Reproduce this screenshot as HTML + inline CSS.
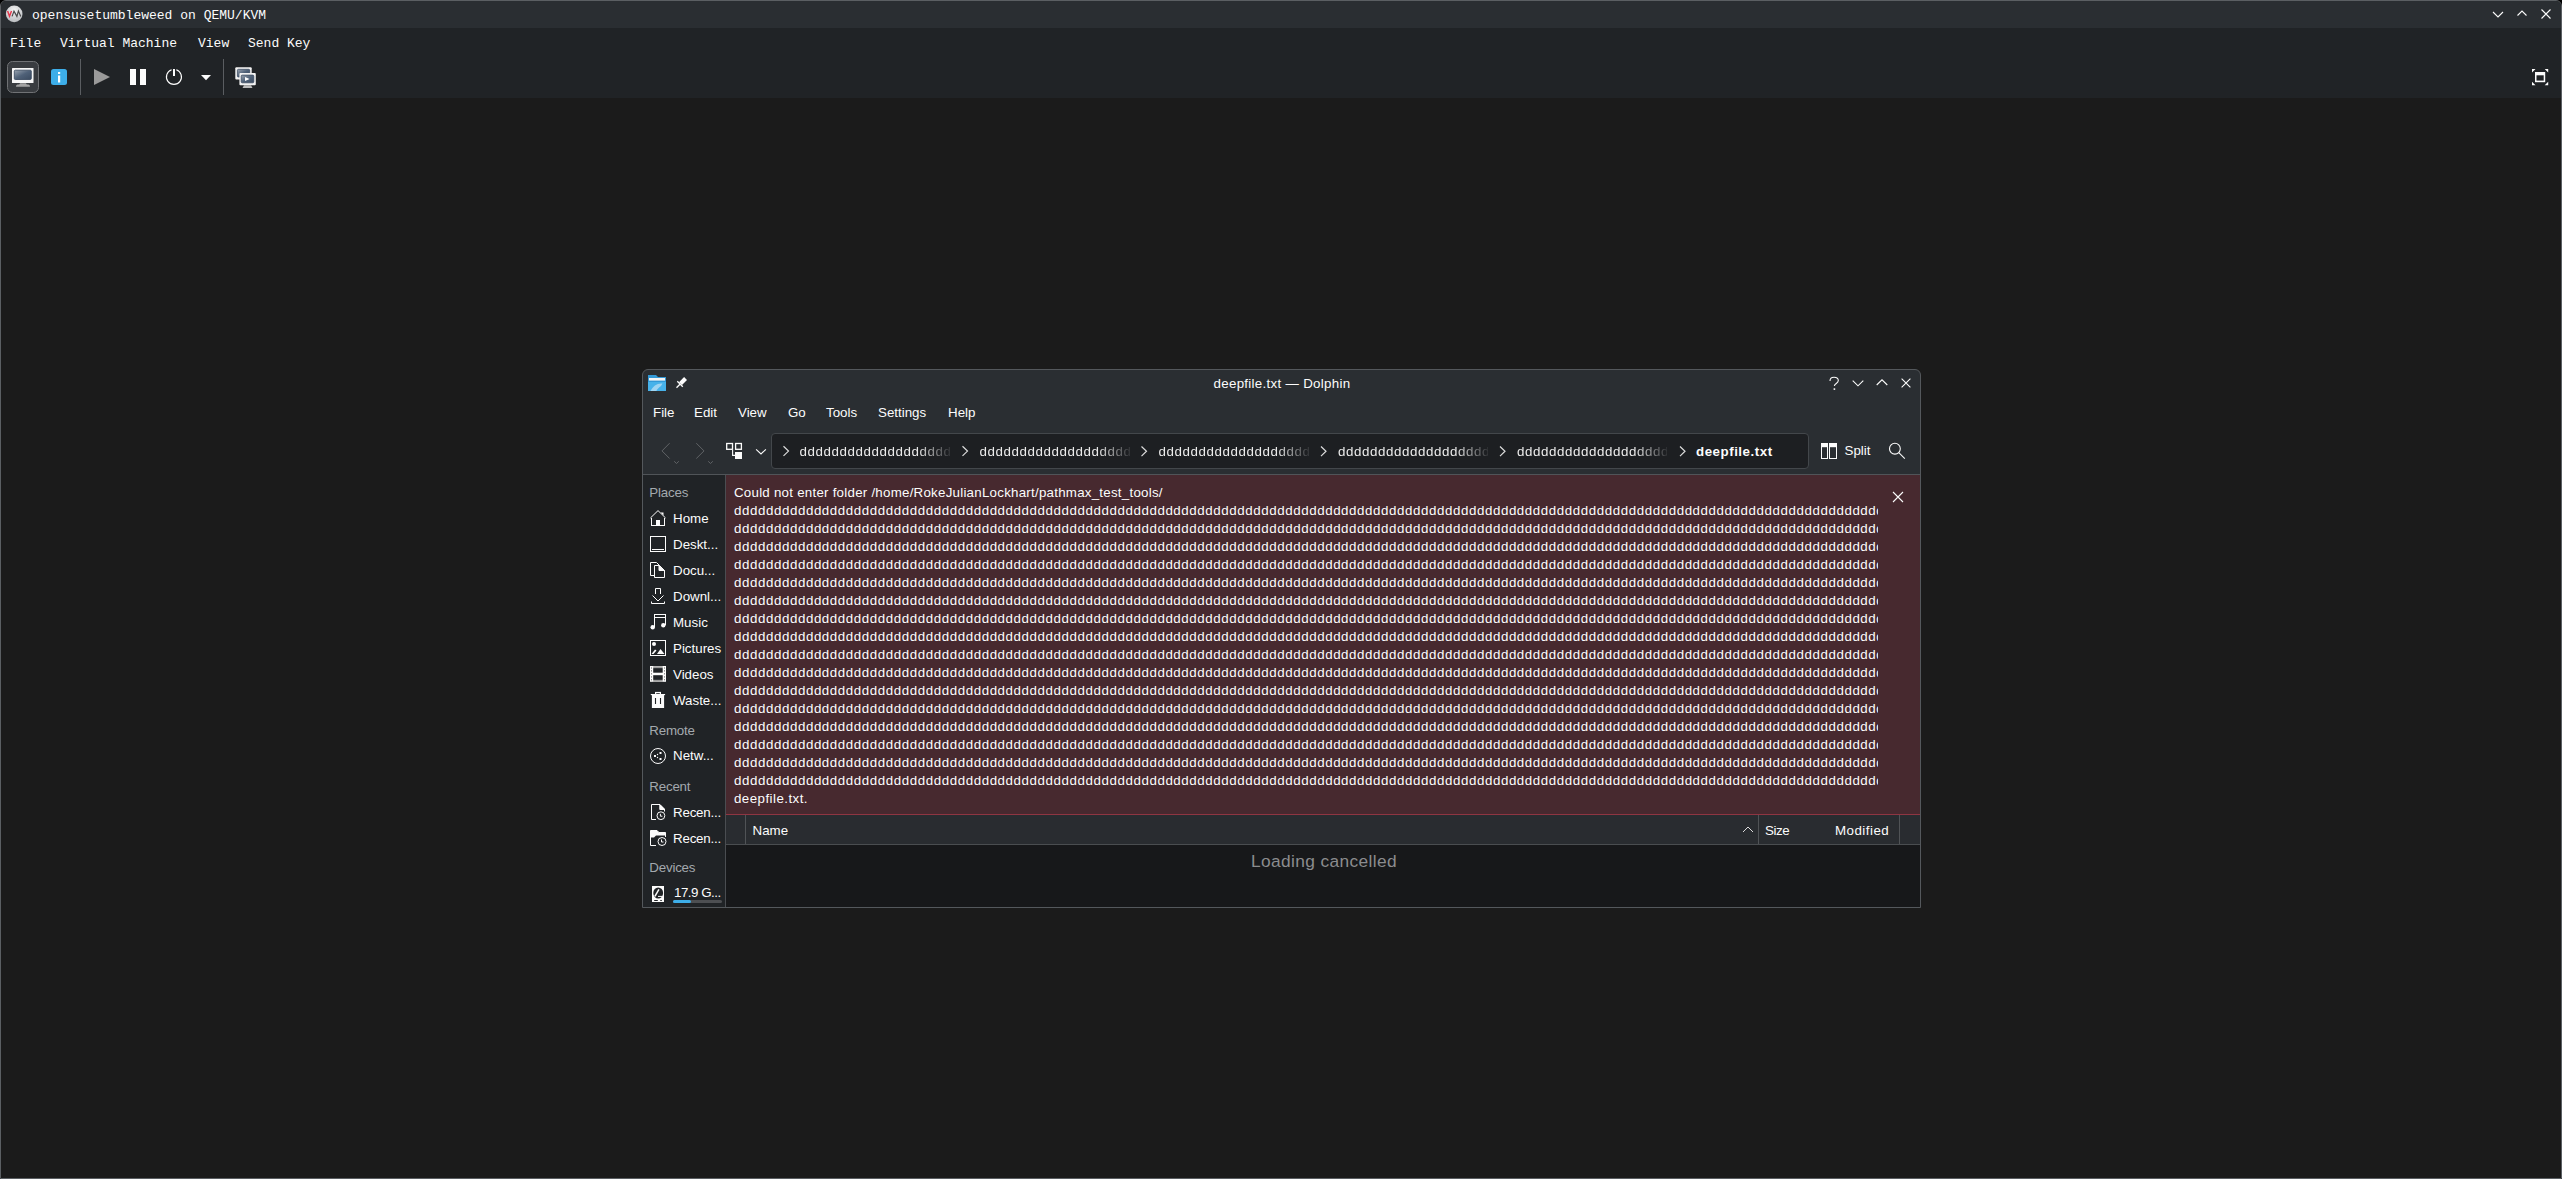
<!DOCTYPE html>
<html><head><meta charset="utf-8">
<style>
*{box-sizing:border-box;margin:0;padding:0}
html,body{width:2562px;height:1179px;overflow:hidden;background:#000}
body{position:relative;font-family:"Liberation Sans",sans-serif;color:#fcfcfc}
.abs{position:absolute}
#frame{position:absolute;left:0;top:0;width:2562px;height:1179px;border:1px solid #5b5f63;border-radius:6px 6px 0 0;background:#1b1b1b;overflow:hidden}
#vtitle{position:absolute;left:0;top:0;width:2560px;height:27px;background:#2a2e32}
#vbar{position:absolute;left:0;top:27px;width:2560px;height:70px;background:#202326}
.mono{font-family:"Liberation Mono",monospace;font-size:13px;white-space:pre;line-height:1}
.sans{font-family:"Liberation Sans",sans-serif;font-size:13.33px;white-space:pre;line-height:1}
#dw{position:absolute;left:642px;top:369px;width:1279px;height:539px;border:1px solid #54585c;border-radius:6px 6px 0 0;background:#2a2e32;overflow:hidden}
</style></head><body>
<div id="frame">
  <div id="vtitle"></div>
  <div id="vbar"></div>
</div>
<!-- VM title -->
<div class="abs mono" style="left:32px;top:9px">opensusetumbleweed on QEMU/KVM</div>
<div class="abs mono" style="left:10px;top:37px">File</div>
<div class="abs mono" style="left:60px;top:37px">Virtual Machine</div>
<div class="abs mono" style="left:198px;top:37px">View</div>
<div class="abs mono" style="left:248px;top:37px">Send Key</div>


<!-- VM icons -->
<svg class="abs" style="left:0;top:0" width="2562" height="100" viewBox="0 0 2562 100">
  <defs>
    <linearGradient id="scr" x1="0" y1="0" x2="1" y2="1">
      <stop offset="0" stop-color="#9aa4b0"/><stop offset="0.5" stop-color="#4f6178"/><stop offset="1" stop-color="#3b4b60"/>
    </linearGradient>
    <radialGradient id="vmg" cx="0.5" cy="0.3" r="0.7">
      <stop offset="0" stop-color="#f4f4f4"/><stop offset="1" stop-color="#b9bcbf"/>
    </radialGradient>
  </defs>
  <!-- vm logo -->
  <circle cx="14.2" cy="13.9" r="8.3" fill="url(#vmg)"/>
  <path d="M7.6 11.1 L9.5 16.3 L11.5 11.1" stroke="#e4354a" stroke-width="1.4" fill="none"/>
  <path d="M12.1 16.4 L14 11.1 L16.9 16.4 L18.4 11.1 L20.8 16.4" stroke="#4a4a4a" stroke-width="1.2" fill="none"/>
  <!-- console button -->
  <rect x="7.5" y="61.5" width="31" height="31" rx="5" fill="#393c40" stroke="#707275" stroke-width="1"/>
  <rect x="12" y="68" width="21.5" height="15" rx="0.5" fill="#f6f6f6"/>
  <rect x="14.3" y="70.2" width="17" height="9.3" rx="1" fill="url(#scr)" stroke="#34445a" stroke-width="0.8"/>
  <path d="M20 83.3 H26 L26.8 84.6 H28.5 Q30.2 85 30 86.8 H16 Q15.8 85 17.5 84.6 H19.2 Z" fill="#a3a3a3"/>
  <!-- info -->
  <rect x="51" y="69" width="16" height="16" rx="2.5" fill="#3daee9"/>
  <rect x="58" y="72" width="2.2" height="2" fill="#fff"/>
  <rect x="58" y="75.5" width="2.2" height="7" fill="#fff"/>
  <!-- separators -->
  <rect x="80" y="59" width="1" height="36" fill="#5a5d61"/>
  <rect x="223" y="59" width="1" height="36" fill="#5a5d61"/>
  <!-- play -->
  <path d="M94 69 L110 77 L94 85 Z" fill="#9a9a9a"/>
  <!-- pause -->
  <rect x="130" y="69" width="6" height="16" fill="#fcfcfc"/>
  <rect x="140" y="69" width="6" height="16" fill="#fcfcfc"/>
  <!-- power -->
  <path d="M171.6 69.75 A7.5 7.5 0 1 0 176.3 69.75" stroke="#fcfcfc" stroke-width="1.15" fill="none"/>
  <rect x="173" y="69" width="2" height="7" fill="#fcfcfc"/>
  <!-- dropdown -->
  <path d="M201 75 L211 75 L206 80.3 Z" fill="#fcfcfc"/>
  <!-- multi monitor -->
  <rect x="235.3" y="67.2" width="16.4" height="12.2" rx="1" fill="#f2f2f2"/>
  <rect x="237.4" y="69.3" width="12.3" height="7.7" rx="1" fill="url(#scr)" stroke="#34445a" stroke-width="0.7"/>
  <rect x="239.4" y="73.1" width="16.4" height="12.2" rx="1" fill="#f2f2f2"/>
  <rect x="241.2" y="75.1" width="12.6" height="7.7" rx="1" fill="url(#scr)" stroke="#34445a" stroke-width="0.7"/>
  <path d="M245 77 L249.6 79 L245 81 Z" fill="#fff"/>
  <path d="M244 85.3 L251 85.3 L252.5 88 L242.5 88 Z" fill="#bdbdbd"/>
  <!-- window buttons -->
  <path d="M2493 12 L2498 17 L2503 12" stroke="#fcfcfc" stroke-width="1.1" fill="none"/>
  <path d="M2517.5 15.5 L2522 11 L2526.5 15.5" stroke="#fcfcfc" stroke-width="1.1" fill="none"/>
  <path d="M2541.5 9.5 L2550.5 18.5 M2550.5 9.5 L2541.5 18.5" stroke="#fcfcfc" stroke-width="1.1" fill="none"/>
  <!-- fullscreen -->
  <rect x="2535" y="72" width="10.2" height="10.2" fill="#fcfcfc"/>
  <rect x="2536.5" y="75.3" width="7.2" height="5.3" fill="#202326"/>
  <path d="M2532 69 L2535.5 69 L2532 72.5 Z M2548.2 69 L2544.7 69 L2548.2 72.5 Z M2532 85.2 L2535.5 85.2 L2532 81.7 Z M2548.2 85.2 L2544.7 85.2 L2548.2 81.7 Z" fill="#fcfcfc"/>
</svg>

<!-- Dolphin window -->
<div id="dw">
  <div class="abs" style="left:0;top:104px;width:1277px;height:1px;background:#505458"></div>
  <div class="abs" style="left:0;top:105px;width:82px;height:432px;background:#202326"></div>
  <div class="abs" style="left:82px;top:105px;width:1px;height:432px;background:#4a4d51"></div>
  <div class="abs" style="left:83px;top:105px;width:1194px;height:339px;background:#47292f"></div>
  <div class="abs" style="left:83px;top:444px;width:1194px;height:1px;background:#8f3542"></div>
  <div class="abs" style="left:83px;top:445px;width:1194px;height:29px;background:#292c30"></div>
  <div class="abs" style="left:83px;top:474px;width:1194px;height:1px;background:#4a4d50"></div>
  <div class="abs" style="left:83px;top:475px;width:1194px;height:62px;background:#17181a"></div>
</div>
<div class="abs sans" style="left:1182px;width:200px;text-align:center;top:376.62px;letter-spacing:0.3px">deepfile.txt — Dolphin</div>
<div class="abs sans" style="left:653px;top:405.72px;font-size:13.33px;color:#fcfcfc;">File</div>
<div class="abs sans" style="left:694px;top:405.72px;font-size:13.33px;color:#fcfcfc;">Edit</div>
<div class="abs sans" style="left:738px;top:405.72px;font-size:13.33px;color:#fcfcfc;">View</div>
<div class="abs sans" style="left:788px;top:405.72px;font-size:13.33px;color:#fcfcfc;">Go</div>
<div class="abs sans" style="left:826px;top:405.72px;font-size:13.33px;color:#fcfcfc;">Tools</div>
<div class="abs sans" style="left:878px;top:405.72px;font-size:13.33px;color:#fcfcfc;">Settings</div>
<div class="abs sans" style="left:948px;top:405.72px;font-size:13.33px;color:#fcfcfc;">Help</div>
<div class="abs" style="left:771px;top:433px;width:1038px;height:36px;border:1px solid #43474b;border-radius:4px;background:#1d1f22"></div>
<div class="abs sans" style="left:799.5px;top:444.52px;width:150px;overflow:hidden;letter-spacing:0.59px;color:#ececec;-webkit-mask-image:linear-gradient(to right,#000 0,#000 78%,rgba(0,0,0,0.1) 100%);mask-image:linear-gradient(to right,#000 0,#000 78%,rgba(0,0,0,0.1) 100%)">ddddddddddddddddddd</div>
<div class="abs sans" style="left:979.5px;top:444.52px;width:150px;overflow:hidden;letter-spacing:0.59px;color:#ececec;-webkit-mask-image:linear-gradient(to right,#000 0,#000 78%,rgba(0,0,0,0.1) 100%);mask-image:linear-gradient(to right,#000 0,#000 78%,rgba(0,0,0,0.1) 100%)">ddddddddddddddddddd</div>
<div class="abs sans" style="left:1158.5px;top:444.52px;width:150px;overflow:hidden;letter-spacing:0.59px;color:#ececec;-webkit-mask-image:linear-gradient(to right,#000 0,#000 78%,rgba(0,0,0,0.1) 100%);mask-image:linear-gradient(to right,#000 0,#000 78%,rgba(0,0,0,0.1) 100%)">ddddddddddddddddddd</div>
<div class="abs sans" style="left:1338px;top:444.52px;width:150px;overflow:hidden;letter-spacing:0.59px;color:#ececec;-webkit-mask-image:linear-gradient(to right,#000 0,#000 78%,rgba(0,0,0,0.1) 100%);mask-image:linear-gradient(to right,#000 0,#000 78%,rgba(0,0,0,0.1) 100%)">ddddddddddddddddddd</div>
<div class="abs sans" style="left:1517px;top:444.52px;width:150px;overflow:hidden;letter-spacing:0.59px;color:#ececec;-webkit-mask-image:linear-gradient(to right,#000 0,#000 78%,rgba(0,0,0,0.1) 100%);mask-image:linear-gradient(to right,#000 0,#000 78%,rgba(0,0,0,0.1) 100%)">ddddddddddddddddddd</div>
<div class="abs sans" style="left:1696px;top:444.52px;font-weight:bold;letter-spacing:0.52px">deepfile.txt</div>
<div class="abs sans" style="left:1844.5px;top:444.32px;font-size:13.33px;color:#fcfcfc;">Split</div>
<div class="abs sans" style="left:649.3px;top:485.72px;font-size:13.33px;color:#a3a9ae;letter-spacing:-0.2px">Places</div>
<div class="abs sans" style="left:673px;top:511.52px;font-size:13.33px;color:#fcfcfc;">Home</div>
<div class="abs sans" style="left:673px;top:537.52px;font-size:13.33px;color:#fcfcfc;">Deskt...</div>
<div class="abs sans" style="left:673px;top:563.52px;font-size:13.33px;color:#fcfcfc;">Docu...</div>
<div class="abs sans" style="left:673px;top:589.52px;font-size:13.33px;color:#fcfcfc;">Downl...</div>
<div class="abs sans" style="left:673px;top:615.52px;font-size:13.33px;color:#fcfcfc;">Music</div>
<div class="abs sans" style="left:673px;top:641.52px;font-size:13.33px;color:#fcfcfc;">Pictures</div>
<div class="abs sans" style="left:673px;top:667.52px;font-size:13.33px;color:#fcfcfc;">Videos</div>
<div class="abs sans" style="left:673px;top:693.52px;font-size:13.33px;color:#fcfcfc;">Waste...</div>
<div class="abs sans" style="left:649.3px;top:723.52px;font-size:13.33px;color:#a3a9ae;letter-spacing:-0.2px">Remote</div>
<div class="abs sans" style="left:673px;top:749.02px;font-size:13.33px;color:#fcfcfc;">Netw...</div>
<div class="abs sans" style="left:649.3px;top:779.52px;font-size:13.33px;color:#a3a9ae;letter-spacing:-0.2px">Recent</div>
<div class="abs sans" style="left:673px;top:805.62px;font-size:13.33px;color:#fcfcfc;letter-spacing:-0.2px">Recen...</div>
<div class="abs sans" style="left:673px;top:831.62px;font-size:13.33px;color:#fcfcfc;letter-spacing:-0.2px">Recen...</div>
<div class="abs sans" style="left:649.3px;top:861.42px;font-size:13.33px;color:#a3a9ae;letter-spacing:-0.2px">Devices</div>
<div class="abs sans" style="left:674px;top:885.72px;font-size:13.33px;color:#fcfcfc;letter-spacing:-0.5px">17.9 G...</div>
<div class="abs" style="left:673px;top:900px;width:49px;height:3px;border-radius:1.5px;background:#4d4f52"></div>
<div class="abs" style="left:673px;top:900px;width:18px;height:3px;border-radius:1.5px;background:#3daee9"></div>
<div class="abs sans" style="left:734px;top:485.72px;font-size:13.33px;color:#fcfcfc;letter-spacing:0.24px">Could not enter folder /home/RokeJulianLockhart/pathmax_test_tools/</div>
<div class="abs sans" style="left:734px;top:503.72px;width:1144px;overflow:hidden;letter-spacing:0.576px">dddddddddddddddddddddddddddddddddddddddddddddddddddddddddddddddddddddddddddddddddddddddddddddddddddddddddddddddddddddddddddddddddddddddddddddddddddddddddddddddd</div>
<div class="abs sans" style="left:734px;top:521.72px;width:1144px;overflow:hidden;letter-spacing:0.576px">dddddddddddddddddddddddddddddddddddddddddddddddddddddddddddddddddddddddddddddddddddddddddddddddddddddddddddddddddddddddddddddddddddddddddddddddddddddddddddddddd</div>
<div class="abs sans" style="left:734px;top:539.72px;width:1144px;overflow:hidden;letter-spacing:0.576px">dddddddddddddddddddddddddddddddddddddddddddddddddddddddddddddddddddddddddddddddddddddddddddddddddddddddddddddddddddddddddddddddddddddddddddddddddddddddddddddddd</div>
<div class="abs sans" style="left:734px;top:557.72px;width:1144px;overflow:hidden;letter-spacing:0.576px">dddddddddddddddddddddddddddddddddddddddddddddddddddddddddddddddddddddddddddddddddddddddddddddddddddddddddddddddddddddddddddddddddddddddddddddddddddddddddddddddd</div>
<div class="abs sans" style="left:734px;top:575.72px;width:1144px;overflow:hidden;letter-spacing:0.576px">dddddddddddddddddddddddddddddddddddddddddddddddddddddddddddddddddddddddddddddddddddddddddddddddddddddddddddddddddddddddddddddddddddddddddddddddddddddddddddddddd</div>
<div class="abs sans" style="left:734px;top:593.72px;width:1144px;overflow:hidden;letter-spacing:0.576px">dddddddddddddddddddddddddddddddddddddddddddddddddddddddddddddddddddddddddddddddddddddddddddddddddddddddddddddddddddddddddddddddddddddddddddddddddddddddddddddddd</div>
<div class="abs sans" style="left:734px;top:611.72px;width:1144px;overflow:hidden;letter-spacing:0.576px">dddddddddddddddddddddddddddddddddddddddddddddddddddddddddddddddddddddddddddddddddddddddddddddddddddddddddddddddddddddddddddddddddddddddddddddddddddddddddddddddd</div>
<div class="abs sans" style="left:734px;top:629.72px;width:1144px;overflow:hidden;letter-spacing:0.576px">dddddddddddddddddddddddddddddddddddddddddddddddddddddddddddddddddddddddddddddddddddddddddddddddddddddddddddddddddddddddddddddddddddddddddddddddddddddddddddddddd</div>
<div class="abs sans" style="left:734px;top:647.72px;width:1144px;overflow:hidden;letter-spacing:0.576px">dddddddddddddddddddddddddddddddddddddddddddddddddddddddddddddddddddddddddddddddddddddddddddddddddddddddddddddddddddddddddddddddddddddddddddddddddddddddddddddddd</div>
<div class="abs sans" style="left:734px;top:665.72px;width:1144px;overflow:hidden;letter-spacing:0.576px">dddddddddddddddddddddddddddddddddddddddddddddddddddddddddddddddddddddddddddddddddddddddddddddddddddddddddddddddddddddddddddddddddddddddddddddddddddddddddddddddd</div>
<div class="abs sans" style="left:734px;top:683.72px;width:1144px;overflow:hidden;letter-spacing:0.576px">dddddddddddddddddddddddddddddddddddddddddddddddddddddddddddddddddddddddddddddddddddddddddddddddddddddddddddddddddddddddddddddddddddddddddddddddddddddddddddddddd</div>
<div class="abs sans" style="left:734px;top:701.72px;width:1144px;overflow:hidden;letter-spacing:0.576px">dddddddddddddddddddddddddddddddddddddddddddddddddddddddddddddddddddddddddddddddddddddddddddddddddddddddddddddddddddddddddddddddddddddddddddddddddddddddddddddddd</div>
<div class="abs sans" style="left:734px;top:719.72px;width:1144px;overflow:hidden;letter-spacing:0.576px">dddddddddddddddddddddddddddddddddddddddddddddddddddddddddddddddddddddddddddddddddddddddddddddddddddddddddddddddddddddddddddddddddddddddddddddddddddddddddddddddd</div>
<div class="abs sans" style="left:734px;top:737.72px;width:1144px;overflow:hidden;letter-spacing:0.576px">dddddddddddddddddddddddddddddddddddddddddddddddddddddddddddddddddddddddddddddddddddddddddddddddddddddddddddddddddddddddddddddddddddddddddddddddddddddddddddddddd</div>
<div class="abs sans" style="left:734px;top:755.72px;width:1144px;overflow:hidden;letter-spacing:0.576px">dddddddddddddddddddddddddddddddddddddddddddddddddddddddddddddddddddddddddddddddddddddddddddddddddddddddddddddddddddddddddddddddddddddddddddddddddddddddddddddddd</div>
<div class="abs sans" style="left:734px;top:773.72px;width:1144px;overflow:hidden;letter-spacing:0.576px">dddddddddddddddddddddddddddddddddddddddddddddddddddddddddddddddddddddddddddddddddddddddddddddddddddddddddddddddddddddddddddddddddddddddddddddddddddddddddddddddd</div>
<div class="abs sans" style="left:734px;top:791.72px;font-size:13.33px;color:#fcfcfc;letter-spacing:0.45px">deepfile.txt.</div>
<div class="abs" style="left:745px;top:815px;width:1px;height:29px;background:#505356"></div>
<div class="abs" style="left:1758px;top:815px;width:1px;height:29px;background:#505356"></div>
<div class="abs" style="left:1899px;top:815px;width:1px;height:29px;background:#505356"></div>
<div class="abs sans" style="left:752.5px;top:823.72px;font-size:13.33px;color:#fcfcfc;">Name</div>
<div class="abs sans" style="left:1765px;top:823.72px;font-size:13.33px;color:#fcfcfc;letter-spacing:-0.45px">Size</div>
<div class="abs sans" style="left:1835px;top:823.72px;font-size:13.33px;color:#fcfcfc;letter-spacing:0.48px">Modified</div>
<div class="abs sans" style="left:1251px;top:853.33px;font-size:17.33px;color:#8b8c8e;letter-spacing:0.37px">Loading cancelled</div>
<svg class="abs" style="left:0;top:0" width="2562" height="1179" viewBox="0 0 2562 1179">
<defs>
 <linearGradient id="fold" x1="0" y1="0" x2="0" y2="1"><stop offset="0" stop-color="#3a9fd8"/><stop offset="1" stop-color="#2f8fca"/></linearGradient>
</defs>
<!-- dolphin folder icon -->
<path d="M648 375 H656 L658 377 H666 V391 H648 Z" fill="#3399d6"/>
<rect x="649" y="378" width="16" height="2.6" fill="#f4f4f4"/>
<path d="M648 382 H666 V391 H648 Z" fill="#47b2ea"/>
<path d="M650.5 391 C653 386 657 383 662.5 383.5 L661 386 C658 388 656.5 390 656.5 391 Z" fill="#9fd4f2"/>
<!-- pin -->
<path d="M679 382.2 L684.1 377 L687 379.9 L682 385.1 Z" fill="#fcfcfc"/>
<path d="M677.3 381.2 L682.8 386.7" stroke="#fcfcfc" stroke-width="1.3" fill="none"/>
<path d="M680.2 384 L676.5 387.8" stroke="#fcfcfc" stroke-width="1.3" fill="none"/>
<!-- title buttons -->
<path d="M1830 381 C1830 378.3 1832 377.3 1834 377.3 C1836.3 377.3 1838.3 378.5 1838.3 380.6 C1838.3 383.3 1834.4 383.6 1834.4 386" stroke="#fcfcfc" stroke-width="1.1" fill="none"/>
<rect x="1833.6" y="388.3" width="1.6" height="1.6" fill="#fcfcfc"/>
<path d="M1852.7 380.6 L1858 385.8 L1863.3 380.6" stroke="#fcfcfc" stroke-width="1.1" fill="none"/>
<path d="M1876.7 385 L1882 379.8 L1887.3 385" stroke="#fcfcfc" stroke-width="1.1" fill="none"/>
<path d="M1901.6 378.6 L1910.4 387.4 M1910.4 378.6 L1901.6 387.4" stroke="#fcfcfc" stroke-width="1.1" fill="none"/>
<!-- nav -->
<path d="M669.6 443.2 L662 450.9 L669.6 458.5" stroke="#606366" stroke-width="1" fill="none"/>
<path d="M674.2 461.3 L676.5 463.5 L678.8 461.3" stroke="#606366" stroke-width="1" fill="none"/>
<path d="M696.3 443.2 L704 450.9 L696.3 458.5" stroke="#606366" stroke-width="1" fill="none"/>
<path d="M708.2 461.3 L710.5 463.5 L712.8 461.3" stroke="#606366" stroke-width="1" fill="none"/>
<!-- view icon -->
<rect x="726.7" y="443.5" width="5.8" height="5.8" stroke="#fcfcfc" stroke-width="1.3" fill="none"/>
<rect x="735.6" y="443.5" width="5.8" height="5.8" stroke="#fcfcfc" stroke-width="1.3" fill="none"/>
<rect x="735" y="452" width="7" height="7" fill="#fcfcfc"/>
<path d="M732.6 450 V455.4 H735" stroke="#fcfcfc" stroke-width="1.1" fill="none"/>
<path d="M756.1 449.3 L761 453.9 L765.9 449.3" stroke="#fcfcfc" stroke-width="1.1" fill="none"/>
<!-- crumb chevrons -->
<path d="M783.5 446.3 L788.5 451.1 L783.5 455.9" stroke="#dcdcdc" stroke-width="1.2" fill="none"/>
<path d="M962.5 446.3 L967.5 451.1 L962.5 455.9" stroke="#dcdcdc" stroke-width="1.2" fill="none"/>
<path d="M1141.5 446.5 L1146.5 451.3 L1141.5 456.1" stroke="#dcdcdc" stroke-width="1.2" fill="none"/>
<path d="M1321 446.5 L1326 451.3 L1321 456.1" stroke="#dcdcdc" stroke-width="1.2" fill="none"/>
<path d="M1500 446.5 L1505 451.3 L1500 456.1" stroke="#dcdcdc" stroke-width="1.2" fill="none"/>
<path d="M1680 446.5 L1685 451.3 L1680 456.1" stroke="#dcdcdc" stroke-width="1.2" fill="none"/>

<!-- split icon -->
<rect x="1821.5" y="443.5" width="6" height="15" stroke="#fcfcfc" stroke-width="1" fill="none"/>
<rect x="1829.5" y="443.5" width="7" height="15" stroke="#fcfcfc" stroke-width="1" fill="none"/>
<rect x="1822" y="444" width="5.5" height="3.2" fill="#fcfcfc"/>
<rect x="1830" y="444" width="6.5" height="3.2" fill="#fcfcfc"/>
<!-- search -->
<circle cx="1894.9" cy="448.7" r="5.4" stroke="#fcfcfc" stroke-width="1.1" fill="none"/>
<path d="M1898.8 452.6 L1904.8 458.6" stroke="#fcfcfc" stroke-width="1.1" fill="none"/>
<!-- message close -->
<path d="M1893 492 L1903 502 M1903 492 L1893 502" stroke="#fcfcfc" stroke-width="1.1" fill="none"/>
<!-- sort arrow -->
<path d="M1743 832 L1748 827 L1753 832" stroke="#dcdcdc" stroke-width="1" fill="none"/>
<g transform="translate(650 510)" fill="none" stroke="#fcfcfc" stroke-width="1"><path d="M1.5 16 V8 M14.5 16 V8 M0.4 8 L8 0.6 L15.6 8"/><path d="M1 15.5 H15"/><rect x="6" y="10" width="4" height="5.5" fill="#fcfcfc" stroke="none"/><path d="M10.5 2.5 H13.5 V5.5 Z" fill="#fcfcfc" stroke="none"/></g>
<g transform="translate(650 536)" fill="none" stroke="#fcfcfc" stroke-width="1"><rect x="0.5" y="0.5" width="15" height="15"/><path d="M2 13.5 H14"/></g>
<g transform="translate(650 562)" fill="none" stroke="#fcfcfc" stroke-width="1"><path d="M4 13.5 H0.5 V0.5 H6.5 L9 3"/><path d="M4.5 3.5 H9.5 L14.5 8.5 V15.5 H4.5 Z"/><path d="M9 3.5 V8.5 H14.5 Z" fill="#fcfcfc"/></g>
<g transform="translate(650 588)" fill="none" stroke="#fcfcfc" stroke-width="1"><path d="M5.5 6 V0.5 H10.5 V6"/><path d="M2.5 7.5 L8 13 L13.5 7.5"/><path d="M1.5 13.5 V15.5 H14.5 V13.5"/></g>
<g transform="translate(650 614)" fill="none" stroke="#fcfcfc" stroke-width="1"><rect x="4.5" y="0.5" width="11" height="3"/><path d="M4.5 3 V13 M15.5 3 V11"/><circle cx="2.7" cy="13.3" r="2.2" fill="#fcfcfc" stroke="none"/><circle cx="13.3" cy="11.3" r="2.2" fill="#fcfcfc" stroke="none"/></g>
<g transform="translate(650 640)" fill="none" stroke="#fcfcfc" stroke-width="1"><rect x="0.5" y="0.5" width="15" height="15"/><circle cx="4" cy="4" r="2" fill="#fcfcfc" stroke="none"/><path d="M1.5 14 L5 9.5 L6.5 10.5 L3.5 14 Z M7 14 L10.5 9 L14.5 14 Z" fill="#fcfcfc" stroke="none"/></g>
<g transform="translate(650 666)" fill="none" stroke="#fcfcfc" stroke-width="1"><rect x="0" y="0" width="16" height="15.8" fill="#fcfcfc" stroke="none"/><rect x="3.2" y="0.3" width="9.5" height="1.8" fill="#9c9c9c" stroke="none"/><rect x="3.2" y="14" width="9.5" height="1.7" fill="#9c9c9c" stroke="none"/><rect x="3.2" y="2.1" width="9.5" height="4.6" fill="#202326" stroke="none"/><rect x="3.2" y="9.2" width="9.5" height="4.7" fill="#202326" stroke="none"/><path d="M1.5 1.3 V2.7 M1.5 4.1 V5.6 M1.5 7.1 V8.5 M1.5 10.2 V11.6 M1.5 13 V14.4 M14.5 1.3 V2.7 M14.5 4.1 V5.6 M14.5 7.1 V8.5 M14.5 10.2 V11.6 M14.5 13 V14.4" stroke="#8a8a8a" stroke-width="1"/></g>
<g transform="translate(650 692)"><path d="M0.8 1.9 H15.1 V2.9 L14.1 3.3 V16 H1.9 V3.3 L0.8 2.9 Z" fill="#fcfcfc"/><rect x="5" y="-0.1" width="6" height="2.5" fill="#fcfcfc"/><rect x="6.2" y="1.1" width="3.6" height="0.8" fill="#202326"/><path d="M5.5 6 V12 M10.5 6 V12" stroke="#202326" stroke-width="1.1"/></g>
<g transform="translate(650 748)" fill="none" stroke="#fcfcfc" stroke-width="1"><circle cx="8" cy="8" r="7.5"/><rect x="4" y="7" width="2" height="2" fill="#fcfcfc" stroke="none"/><rect x="9.5" y="4" width="2" height="2" fill="#fcfcfc" stroke="none"/><rect x="9.5" y="10" width="2" height="2" fill="#fcfcfc" stroke="none"/><circle cx="7.5" cy="6.5" r="0.7" fill="#fcfcfc" stroke="none"/><circle cx="7.5" cy="9.5" r="0.7" fill="#fcfcfc" stroke="none"/></g>
<g transform="translate(650 804)" fill="none" stroke="#fcfcfc" stroke-width="1"><path d="M6 15.5 H1.5 V0.5 H10 L14.5 5 V7.5"/><path d="M9.8 0.8 V5.5 H14.5 Z" fill="#fcfcfc"/><circle cx="10.9" cy="11.7" r="3.9"/><path d="M10.4 9.8 V12.2 H12.4"/></g>
<g transform="translate(650 830)" fill="none" stroke="#fcfcfc" stroke-width="1"><path d="M6 15.5 H0.5 V0.5 H7 L9 2.5 H15.5 V7"/><path d="M0.5 0.5 H7 L9 2.5 H15.5 V5.5 H6 L4 7.5 H0.5 Z" fill="#fcfcfc" stroke="none"/><circle cx="12" cy="11.5" r="4"/><path d="M11.5 9.5 V12 H13.5"/></g>
<g transform="translate(652 886)"><rect x="0" y="0" width="12" height="16" fill="#fcfcfc"/><ellipse cx="6.2" cy="7" rx="4.9" ry="5.5" fill="#202326"/><path d="M2.9 10.4 L6.9 3.3" stroke="#fcfcfc" stroke-width="1.5"/><rect x="6" y="9.9" width="4" height="1" fill="#fcfcfc"/><path d="M2.2 14.5 H5.8 M8.3 14.5 H9.8" stroke="#202326" stroke-width="1"/></g>
</svg>
</body></html>
